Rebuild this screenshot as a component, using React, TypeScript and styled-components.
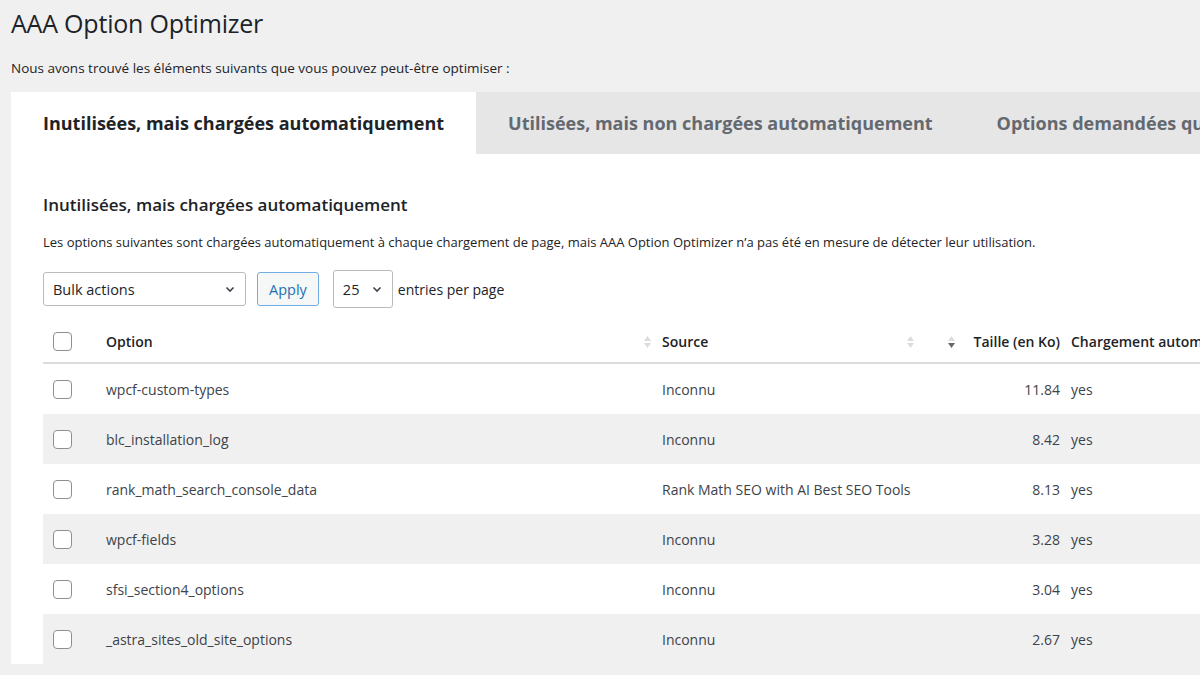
import React from "react";
import styled, { createGlobalStyle } from "styled-components";

const Global = createGlobalStyle`
  html, body { margin: 0; padding: 0; background: #f0f0f1; overflow: hidden; }
  body { font-family: "Open Sans", "Noto Sans", sans-serif; color: #1d2327; width: 1200px; }
`;
const Page = styled.div`padding: 0 0 0 11px; width: 1400px;`;
const Title = styled.h1`font-size: 25px; font-weight: 400; margin: 0; padding-top: 7px; line-height: 32px; letter-spacing: -0.2px;`;
const Sub = styled.p`font-size: 13.5px; margin: 20px 0 0; line-height: 18px;`;
const Tabs = styled.div`display: flex; margin-top: 15px; background: #e6e6e6; height: 62px;`;
const Tab = styled.div<{ $active?: boolean }>`
  display: flex; align-items: center; padding: 0 32px; font-size: 18px; font-weight: 700;
  background: ${p => (p.$active ? "#fff" : "transparent")};
  color: ${p => (p.$active ? "#1d2327" : "#646970")}; white-space: nowrap;
`;
const Panel = styled.div`background: #fff; padding: 38px 32px 0;`;
const H2 = styled.h2`font-size: 17px; font-weight: 600; margin: 0; line-height: 26px;`;
const Desc = styled.p`font-size: 13px; margin: 14px 0 0; line-height: 20px;`;
const Controls = styled.div`display: flex; align-items: center; gap: 11px; margin-top: 18px; font-size: 14px;`;
const Select = styled.div<{ $w: number; $h: number }>`
  width: ${p => p.$w}px; height: ${p => p.$h}px; box-sizing: border-box; border: 1px solid #bbb; border-radius: 3px;
  display: flex; align-items: center; justify-content: space-between; padding: 0 9px; font-size: 14.5px;
`;
const Button = styled.div`
  height: 34px; box-sizing: border-box; border: 1px solid #72aee6; border-radius: 3px; background: #f6f7f7;
  color: #2271b1; display: flex; align-items: center; padding: 0 11px; font-size: 14.5px;
`;
const Table = styled.div`margin-top: 13px; width: 1300px;`;
const Row = styled.div<{ $head?: boolean; $alt?: boolean }>`
  display: grid; grid-template-columns: 63px 556px 263px 146px 1fr; align-items: center;
  height: ${p => (p.$head ? 41 : 50)}px; font-size: 14px;
  background: ${p => (p.$alt ? "#f0f0f1" : "#fff")};
  border-bottom: ${p => (p.$head ? "2px solid #dcdcde" : "none")};
  font-weight: ${p => (p.$head ? 600 : 400)};
  color: ${p => (p.$head ? "#1d2327" : "#3c434a")};
`;
const Box = styled.span`width: 17px; height: 17px; border: 1px solid #8c8f94; border-radius: 4px; margin-left: 10px; background: #fff;`;
const Cell = styled.div<{ $right?: boolean }>`display: flex; align-items: center; justify-content: ${p => (p.$right ? "flex-end" : "space-between")}; padding-right: ${p => (p.$right ? "11px" : "10px")}; gap: 18px; white-space: nowrap;`;
const Last = styled.div`white-space: nowrap;`;

const Chev = ({ size = 12 }: { size?: number }) => (
  <svg width={size} height={size} viewBox="0 0 12 12"><path d="M2.5 4.5 6 8l3.5-3.5" fill="none" stroke="#3c434a" strokeWidth="1.6" /></svg>
);
const Sort = ({ down }: { down?: boolean }) => (
  <svg width="9" height="14" viewBox="0 0 9 14">
    <path d="M4.5 1 8 6H1z" fill="#dcdcde" />
    <path d="M4.5 13 8 8H1z" fill={down ? "#646970" : "#dcdcde"} />
  </svg>
);

const rows = [
  ["wpcf-custom-types", "Inconnu", "11.84"],
  ["blc_installation_log", "Inconnu", "8.42"],
  ["rank_math_search_console_data", "Rank Math SEO with AI Best SEO Tools", "8.13"],
  ["wpcf-fields", "Inconnu", "3.28"],
  ["sfsi_section4_options", "Inconnu", "3.04"],
  ["_astra_sites_old_site_options", "Inconnu", "2.67"],
];

export default function App() {
  return (
    <Page>
      <Global />
      <Title>AAA Option Optimizer</Title>
      <Sub>Nous avons trouvé les éléments suivants que vous pouvez peut-être optimiser :</Sub>
      <Tabs>
        <Tab $active>Inutilisées, mais chargées automatiquement</Tab>
        <Tab>Utilisées, mais non chargées automatiquement</Tab>
        <Tab>Options demandées qui n’existent pas</Tab>
      </Tabs>
      <Panel>
        <H2>Inutilisées, mais chargées automatiquement</H2>
        <Desc>Les options suivantes sont chargées automatiquement à chaque chargement de page, mais AAA Option Optimizer n’a pas été en mesure de détecter leur utilisation.</Desc>
        <Controls>
          <Select $w={203} $h={34}>Bulk actions<Chev /></Select>
          <Button>Apply</Button>
          <Select $w={60} $h={38} style={{ marginLeft: 3 }}>25<Chev /></Select>
          <span style={{ marginLeft: -6 }}>entries per page</span>
        </Controls>
        <Table>
          <Row $head>
            <Box />
            <Cell>Option<Sort /></Cell>
            <Cell>Source<Sort /></Cell>
            <Cell $right><Sort down />Taille (en Ko)</Cell>
            <Last>Chargement automatique</Last>
          </Row>
          {rows.map((r, i) => (
            <Row key={r[0]} $alt={i % 2 === 1}>
              <Box />
              <Cell>{r[0]}</Cell>
              <Cell>{r[1]}</Cell>
              <Cell $right>{r[2]}</Cell>
              <Last>yes</Last>
            </Row>
          ))}
        </Table>
      </Panel>
    </Page>
  );
}
